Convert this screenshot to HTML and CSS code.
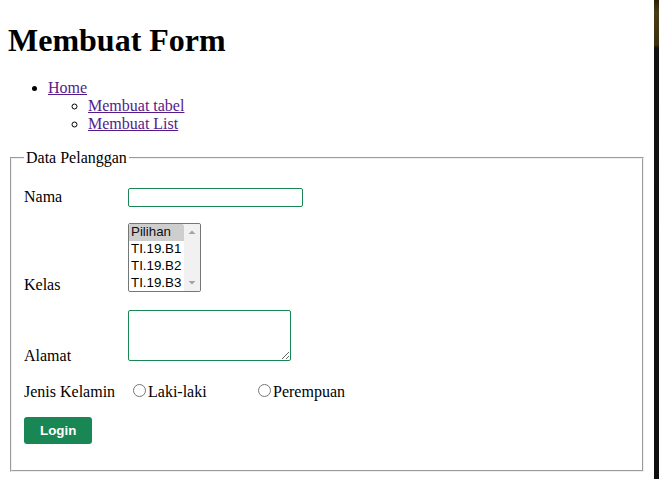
FILE: index.html
```html
<!DOCTYPE html>
<html lang="id">
<head>
<meta charset="utf-8">
<title>Membuat Form</title>
<link rel="stylesheet" href="styles.css">
</head>
<body>
<div class="page">
  <main class="content">
    <h1 class="title">Membuat Form</h1>
    <ul class="nav">
      <li><a href="#home" class="nav-link">Home</a>
        <ul class="subnav">
          <li><a href="#tabel" class="nav-link">Membuat tabel</a></li>
          <li><a href="#list" class="nav-link">Membuat List</a></li>
        </ul>
      </li>
    </ul>
    <form class="form">
      <fieldset class="box">
        <legend class="box-legend">Data Pelanggan</legend>
        <p class="row"><label class="lbl" for="nama">Nama</label> <input id="nama" type="text" class="field-text"></p>
        <p class="row"><label class="lbl" for="kelas">Kelas</label> <span class="listbox"><span class="listbox-inner"><select id="kelas" size="4" class="field-select"><option selected>Pilihan</option><option>TI.19.B1</option><option>TI.19.B2</option><option>TI.19.B3</option></select><span class="listbox-bar" aria-hidden="true"><svg class="arrow" width="16" height="17" viewBox="0 0 16 17"><path d="M4.5 10 L8 6.5 L11.5 10 Z" fill="#a3a3a3"/></svg><svg class="arrow" width="16" height="17" viewBox="0 0 16 17"><path d="M4.5 7 L8 10.5 L11.5 7 Z" fill="#a3a3a3"/></svg></span></span></span></p>
        <p class="row"><label class="lbl" for="alamat">Alamat</label> <textarea id="alamat" class="field-area"></textarea></p>
        <p class="row"><label class="lbl">Jenis Kelamin</label> <span class="opt opt-first"><input type="radio" name="jk" class="radio">Laki-laki</span><span class="opt"><input type="radio" name="jk" class="radio">Perempuan</span></p>
        <p class="row"><button type="button" class="btn">Login</button></p>
      </fieldset>
    </form>
  </main>
  <div class="edge"></div>
</div>
</body>
</html>
```
FILE: styles.css
```css
html, body {
  margin: 0;
  padding: 0;
  background: #fff;
}

body {
  font-family: "Liberation Serif", "Times New Roman", serif;
  font-size: 16px;
  color: #000;
}

.page {
  display: flex;
  min-height: 100vh;
}

.content {
  flex: 1;
  padding: 0 8px;
  min-width: 0;
}

.edge {
  width: 5px;
  flex: none;
  background: linear-gradient(to bottom, #2a2108 0, #4a3c16 12px, #3b300f 45px, #121212 48px, #0f0f0f 100%);
}

.title {
  font-size: 32px;
  font-weight: bold;
  margin: 22px 0 20px;
}

.nav {
  margin: 0 0 16px;
  padding-left: 40px;
}

.subnav {
  margin: 0;
  padding-left: 40px;
}

.nav-link {
  color: #551a8b;
}

.form {
  margin: 0;
}

.box {
  margin: 0 2px;
  padding-top: 4.6px;
}

.row {
  margin: 16px 0;
}

.lbl {
  display: inline-block;
  width: 100px;
}

.field-text {
  box-sizing: border-box;
  width: 175px;
  height: 19px;
  border: 1px solid #198754;
  border-radius: 2px;
  padding: 1px 2px;
  font: 13.33px "Liberation Sans", Arial, sans-serif;
}

.listbox {
  display: inline-block;
  box-sizing: border-box;
  width: 73px;
  height: 69px;
  border: 1px solid #767676;
  border-radius: 2px;
  overflow: hidden;
  margin-bottom: -2px;
  background: #fff;
}

.listbox-inner {
  display: flex;
  height: 100%;
}

.field-select {
  flex: 1;
  min-width: 0;
  height: 67px;
  margin: 0;
  padding: 0;
  border: none;
  outline: none;
  overflow: hidden;
  font: 13.33px "Liberation Sans", Arial, sans-serif;
  color: #000;
  background: #fff;
}

.field-select option {
  padding: 0 2px 1px;
  line-height: 16px;
}

.listbox-bar {
  flex: none;
  width: 16px;
  display: flex;
  flex-direction: column;
  justify-content: space-between;
  background: #f1f1f1;
}

.arrow {
  display: block;
}

.field-area {
  box-sizing: border-box;
  width: 163px;
  height: 51px;
  border: 1px solid #198754;
  border-radius: 2px;
}

.opt {
  display: inline-block;
}

.opt-first {
  width: 125px;
}

.radio {
  margin: 3px 2px 0 5px;
}

.btn {
  font: bold 13.33px "Liberation Sans", Arial, sans-serif;
  color: #fff;
  background: #198754;
  border: none;
  border-radius: 3px;
  padding: 6px 16px;
}
```
